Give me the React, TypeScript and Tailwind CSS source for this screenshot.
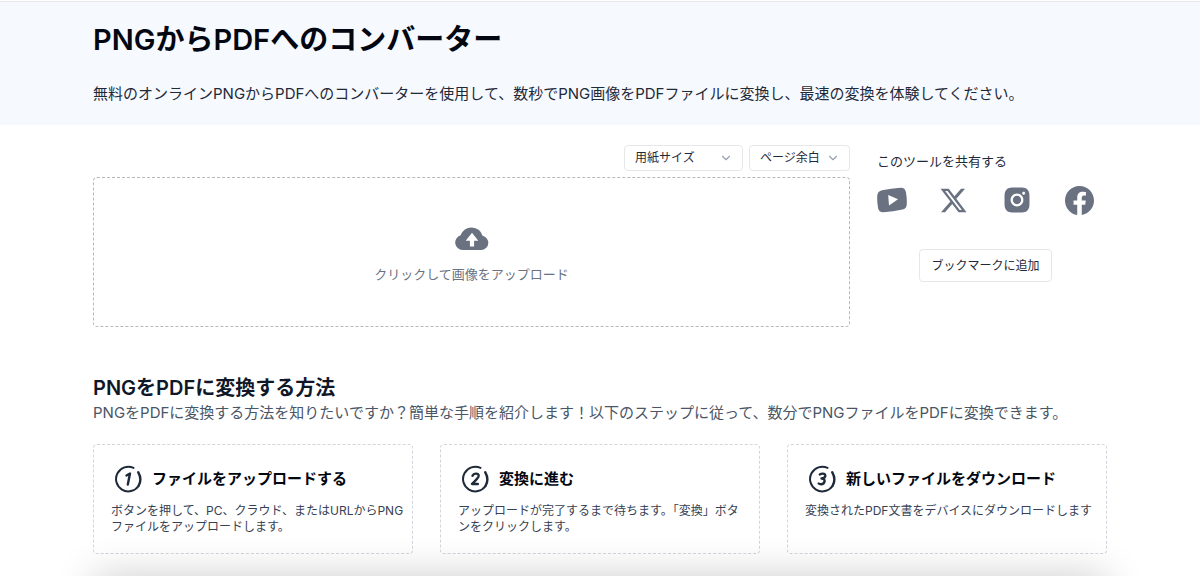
import { ChevronDown } from "lucide-react";
import { AiFillInstagram } from "react-icons/ai";
import { FaXTwitter } from "react-icons/fa6";
import { BsFacebook } from "react-icons/bs";

const steps = [
  {
    title: "ファイルをアップロードする",
    text: "ボタンを押して、PC、クラウド、またはURLからPNG\nファイルをアップロードします。",
  },
  {
    title: "変換に進む",
    text: "アップロードが完了するまで待ちます。「変換」ボタ\nンをクリックします。",
  },
  {
    title: "新しいファイルをダウンロード",
    text: "変換されたPDF文書をデバイスにダウンロードします",
  },
];

const YoutubeIcon = () => (
  <svg viewBox="0 0 30 26" className="h-[26px] w-[30px]" fill="currentColor">
    <path
      fillRule="evenodd"
      d="M5 3.200Q14 1.200 23.500.7Q28 .5 28.900 5Q30.200 12 29.700 18Q29.300 21.800 25.500 22.600Q16 24.600 6.500 25.200Q2 25.400 1.100 21.200Q-.2 14 .3 8.200Q.7 4.200 5 3.200ZM11.200 8L12 18.500L21 12.300Z"
    />
  </svg>
);

const CloudUploadIcon = () => (
  <svg viewBox="0 0 34 24" className="h-6 w-[34px]" fill="currentColor">
    <path
      fillRule="evenodd"
      d="M7.500 24A7.500 7.500 0 0 1 5.600 9.300A11.500 11.500 0 0 1 27.600 9.800A7.200 7.200 0 0 1 26.800 24ZM17 6.800L10.700 14.800H14.900V20.500H19.100V14.800H23.300Z"
    />
  </svg>
);

const digitPaths = [
  "M12.500 10.500L16 8.500L13.800 19.500",
  "M11.500 10.800Q12.500 8.600 15 8.600Q18 8.600 17.600 11.300Q17.200 13.200 11 19H16.800",
  "M11.800 9.400Q13.200 8.500 14.800 8.600Q17.600 8.800 17.300 11.200Q17 13.300 13.500 13.500Q16.900 13.800 16.600 16.300Q16 19.400 12.900 19.300Q11.500 19.300 10.700 18.500",
];

const StepIcon = ({ index }: { index: number }) => (
  <svg
    viewBox="0 0 28 28"
    className="h-7 w-7 shrink-0"
    fill="none"
    stroke="currentColor"
    strokeWidth="2"
    strokeLinecap="round"
    strokeLinejoin="round"
  >
    <path d="M19.500 2.900A12.300 12.300 0 1 0 24.500 21" />
    <path d="M24.500 21Q28.400 14.500 24.200 7.200" strokeWidth="2.400" />
    <path d={digitPaths[index]} strokeWidth="2.400" />
  </svg>
);

const SelectBox = ({ label, wide }: { label: string; wide?: boolean }) => (
  <div className="relative">
    <select
      aria-label={label}
      className={`block h-[26px] appearance-none rounded border border-gray-200 bg-white pl-[10px] text-xs text-gray-800 ${
        wide ? "w-[119px]" : "w-[101px]"
      }`}
    >
      <option>{label}</option>
    </select>
    <ChevronDown className="pointer-events-none absolute top-[6px] right-[10px] h-[14px] w-[14px] text-gray-400" />
  </div>
);

const App = () => {
  return (
    <div
      lang="ja"
      className="min-h-screen bg-white font-['Inter','Noto_Sans_CJK_JP',sans-serif] text-gray-800"
    >
      <header className="pt-px">
        <div className="border-t border-gray-200 bg-[#f6f9fe] px-[93px] pt-4 pb-[19px]">
          <h1 className="text-[29px] leading-[44px] font-semibold text-gray-950">
            PNGからPDFへのコンバーター
          </h1>
          <p className="mt-5 text-[15px] leading-6">
            無料のオンラインPNGからPDFへのコンバーターを使用して、数秒でPNG画像をPDFファイルに変換し、最速の変換を体験してください。
          </p>
        </div>
      </header>

      <main className="px-[93px] pt-5 pb-6">
        <div className="flex gap-[27px]">
          <section className="flex-1">
            <div className="flex justify-end gap-[6px]">
              <SelectBox label="用紙サイズ" wide />
              <SelectBox label="ページ余白" />
            </div>
            <label className="mt-[6px] flex h-[150px] cursor-pointer flex-col items-center justify-center gap-[14px] rounded border border-dashed border-[#b8b8b8] pt-[6px] text-gray-500">
              <CloudUploadIcon />
              <span className="text-[13px] leading-5">
                クリックして画像をアップロード
              </span>
              <input type="file" accept="image/png" className="sr-only" />
            </label>
          </section>

          <aside className="w-[230px] pt-[6px]">
            <p className="text-[13px] leading-5">このツールを共有する</p>
            <div className="mt-[14px] flex h-[30px] w-[217px] items-center justify-between text-gray-500">
              <a href="#youtube" aria-label="YouTube">
                <YoutubeIcon />
              </a>
              <a href="#x" aria-label="X">
                <FaXTwitter className="h-[29px] w-[29px]" />
              </a>
              <a href="#instagram" aria-label="Instagram">
                <AiFillInstagram className="h-8 w-8" />
              </a>
              <a href="#facebook" aria-label="Facebook">
                <BsFacebook className="h-[29px] w-[29px]" />
              </a>
            </div>
            <div className="mt-[34px] flex w-[217px] justify-center">
              <button
                type="button"
                className="h-[33px] w-[133px] rounded border border-gray-200 text-xs"
              >
                ブックマークに追加
              </button>
            </div>
          </aside>
        </div>

        <section className="mt-[47px]">
          <h2 className="text-xl leading-7 font-semibold text-gray-900">
            PNGをPDFに変換する方法
          </h2>
          <p className="text-[15px] leading-[22px] text-gray-600">
            PNGをPDFに変換する方法を知りたいですか？簡単な手順を紹介します！以下のステップに従って、数分でPNGファイルをPDFに変換できます。
          </p>
          <div className="mt-5 grid grid-cols-3 gap-[27px]">
            {steps.map((step, index) => (
              <article
                key={step.title}
                className="h-[110px] rounded border border-dashed border-gray-300 py-5 pl-[17px]"
              >
                <div className="flex items-center gap-[10px] pl-[3px]">
                  <StepIcon index={index} />
                  <h3 className="text-[15px] leading-6 font-semibold text-gray-950">
                    {step.title}
                  </h3>
                </div>
                <p className="mt-[10px] text-xs leading-4 whitespace-pre-line text-gray-700">
                  {step.text}
                </p>
              </article>
            ))}
          </div>
        </section>
      </main>

      <div className="fixed inset-x-[93px] top-full h-20 shadow-[0_0_40px_rgba(0,0,0,0.2)]" />
    </div>
  );
};

export default App;
